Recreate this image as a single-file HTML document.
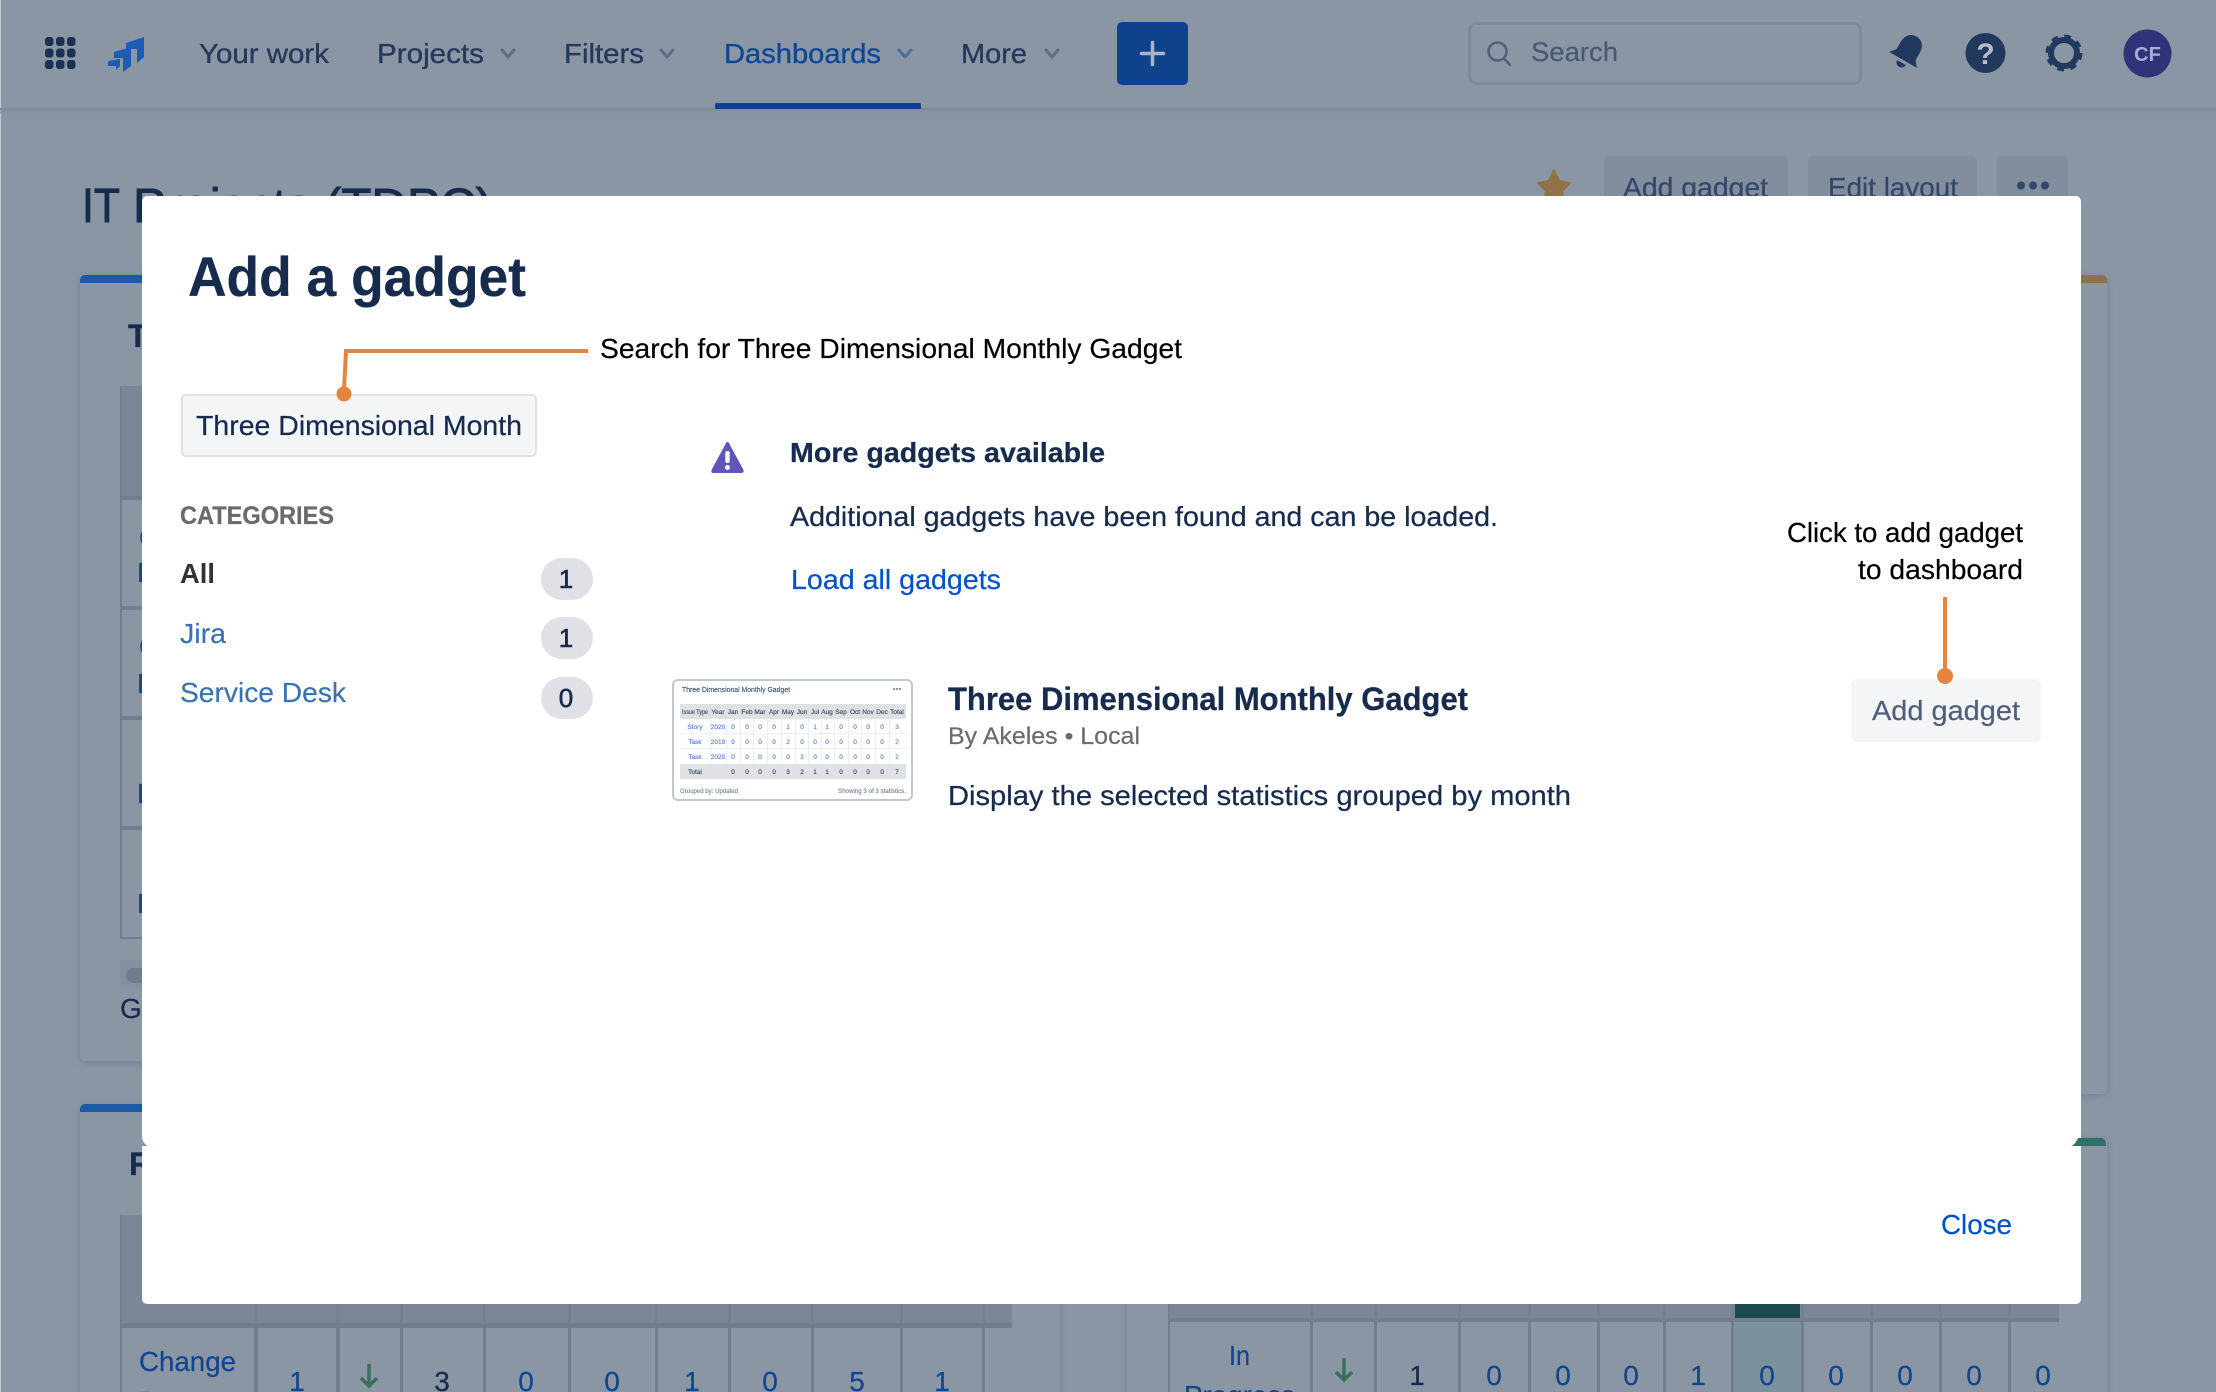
<!DOCTYPE html>
<html lang="en">
<head>
<meta charset="utf-8">
<title>Add a gadget</title>
<style>
html,body{margin:0;padding:0;background:#8b96a5;width:2216px;height:1392px;overflow:hidden}
svg{display:block}
text{font-family:"Liberation Sans",sans-serif;font-size:28px;white-space:pre}
.nav{fill:#26395b;stroke:#26395b;stroke-width:.35px}
.lb{fill:#11458e;stroke:#11458e;stroke-width:.25px}
.b{font-weight:700}
.n{fill:#172b4d;stroke:#172b4d;stroke-width:.25px}
.a{fill:#0052cc;stroke:#0052cc;stroke-width:.2px}
.c{fill:#000;stroke:#000;stroke-width:.2px}
.k{fill:#3b73af;stroke:#3b73af;stroke-width:.2px}
.t text{font-size:6.500px;stroke-width:.15px;stroke:currentColor}
</style>
</head>
<body>
<svg xmlns="http://www.w3.org/2000/svg" width="2216" height="1392" viewBox="0 0 2216 1392">
<rect width="2216" height="1392" fill="#8b96a5"/>
<rect x="0" y="0" width="1" height="1392" fill="#c3c8d0"/>

<!-- top nav -->
<rect x="0" y="108" width="2216" height="2" fill="#7f8a9a"/>
<rect x="0" y="110" width="2216" height="4" fill="#87929f" opacity=".6"/>
<g fill="#1c3055">
<rect x="45" y="37" width="8.500" height="9" rx="3"/><rect x="56" y="37" width="8.500" height="9" rx="3"/><rect x="67" y="37" width="8.500" height="9" rx="3"/>
<rect x="45" y="48.500" width="8.500" height="9" rx="3"/><rect x="56" y="48.500" width="8.500" height="9" rx="3"/><rect x="67" y="48.500" width="8.500" height="9" rx="3"/>
<rect x="45" y="60" width="8.500" height="9" rx="3"/><rect x="56" y="60" width="8.500" height="9" rx="3"/><rect x="67" y="60" width="8.500" height="9" rx="3"/>
</g>
<g fill="#1c5cb2">
<path d="M126 43L144 37V57L137 63V49H126Z"/>
<path d="M114 52L131 47V66L123 72V58H114Z"/>
<path d="M108 61L120 59V66L116 70V66H108Z"/>
</g>
<text class="nav" x="199" y="63" textLength="130" lengthAdjust="spacingAndGlyphs">Your work</text>
<text class="nav" x="377" y="63" textLength="107" lengthAdjust="spacingAndGlyphs">Projects</text>
<text class="nav" x="564" y="63" textLength="80" lengthAdjust="spacingAndGlyphs">Filters</text>
<text x="724" y="63" fill="#0d4795" stroke="#0d4795" stroke-width=".35" textLength="157" lengthAdjust="spacingAndGlyphs">Dashboards</text>
<text class="nav" x="961" y="63" textLength="66" lengthAdjust="spacingAndGlyphs">More</text>
<g fill="none" stroke="#5d6e8b" stroke-width="3" stroke-linecap="round" stroke-linejoin="round">
<path d="M502 50L508 57L514 50"/>
<path d="M661 50L667 57L673 50"/>
<path stroke="#4d6d9f" d="M899 50L905 57L911 50"/>
<path d="M1046 50L1052 57L1058 50"/>
</g>
<path d="M715 109V105a2 2 0 0 1 2-2H919a2 2 0 0 1 2 2V109Z" fill="#0e428c"/>
<rect x="1117" y="22" width="71" height="63" rx="5" fill="#0e428c"/>
<path d="M1152.500 42.500V64.500M1141.500 53.500H1163.500" stroke="#a9b4c6" stroke-width="3.500" stroke-linecap="round"/>

<rect x="1469.500" y="23.500" width="391" height="60" rx="7" fill="#8b96a5" stroke="#7e8a9a" stroke-width="3"/>
<circle cx="1497.500" cy="51.500" r="9" fill="none" stroke="#4f5f79" stroke-width="2.500"/>
<path d="M1504 58.500L1510 65" stroke="#4f5f79" stroke-width="2.500" stroke-linecap="round"/>
<text x="1531" y="61" fill="#4a5a74" stroke="#4a5a74" stroke-width=".25" style="font-size:27px" textLength="87" lengthAdjust="spacingAndGlyphs">Search</text>

<g transform="rotate(30 1907 53)" fill="#21395c">
<path d="M1907 34c-7.500 0-11 6-11 13v8l-5 6h32l-5-6v-8c0-7-3.500-13-11-13z"/>
<path d="M1902 64a5 5 0 0 0 10 0z"/>
</g>
<circle cx="1985.500" cy="53" r="20" fill="#21395c"/>
<text x="1985.500" y="64" text-anchor="middle" class="b" fill="#b6bdc9" style="font-size:30px">?</text>
<g fill="none" stroke="#21395c">
<circle cx="2064" cy="53" r="13" stroke-width="6"/>
<circle cx="2064" cy="53" r="15.500" stroke-width="6" stroke-dasharray="6.200 6"/>
</g>
<circle cx="2147.500" cy="53.500" r="24" fill="#2f3478"/>
<text x="2147.500" y="61" text-anchor="middle" class="b" fill="#a8aed2" style="font-size:20px">CF</text>

<!-- page header behind modal -->
<text x="82" y="222" fill="#172b4d" stroke="#172b4d" stroke-width=".9" style="font-size:48px" textLength="38" lengthAdjust="spacingAndGlyphs">IT</text>
<text x="133" y="222" fill="#172b4d" stroke="#172b4d" stroke-width=".9" style="font-size:48px" textLength="359" lengthAdjust="spacingAndGlyphs">Projects (TDPC)</text>
<path d="M1554 170L1559 181L1570 183L1562 191L1564 203H1544L1546 191L1538 183L1549 181Z" fill="#8f7347" stroke="#8f7347" stroke-width="2" stroke-linejoin="round"/>
<rect x="1604" y="156" width="184" height="60" rx="5" fill="#828d9d"/>
<rect x="1808" y="156" width="169" height="60" rx="5" fill="#828d9d"/>
<rect x="1997" y="156" width="71" height="60" rx="5" fill="#828d9d"/>
<text x="1623" y="197" fill="#33476a" stroke="#33476a" stroke-width=".25" textLength="145" lengthAdjust="spacingAndGlyphs">Add gadget</text>
<text x="1828" y="197" fill="#33476a" stroke="#33476a" stroke-width=".25" textLength="130" lengthAdjust="spacingAndGlyphs">Edit layout</text>
<g fill="#33476a"><circle cx="2021" cy="185.500" r="4"/><circle cx="2033" cy="185.500" r="4"/><circle cx="2045" cy="185.500" r="4"/></g>

<!-- panels -->
<g fill="#8b96a5" style="filter:drop-shadow(0 2px 4px rgba(9,30,66,.18))">
<rect x="80" y="275" width="980" height="786" rx="5"/>
<rect x="1127" y="275" width="980" height="819" rx="5"/>
<rect x="80" y="1104" width="980" height="320" rx="5"/>
<rect x="1127" y="1138" width="980" height="280" rx="5"/>
</g>
<path d="M80 283V280a5 5 0 0 1 5-5H1055a5 5 0 0 1 5 5V283Z" fill="#1c5aa8"/>
<path d="M80 1112V1109a5 5 0 0 1 5-5H1055a5 5 0 0 1 5 5V1112Z" fill="#1c5aa8"/>
<path d="M1127 283V280a5 5 0 0 1 5-5H2102a5 5 0 0 1 5 5V283Z" fill="#8f7347"/>
<path d="M1127 1146V1143a5 5 0 0 1 5-5H2101a5 5 0 0 1 5 5V1146Z" fill="#32706a"/>

<!-- upper-left table fragment -->
<text x="128" y="347" class="b n" style="font-size:32px">Three</text>
<rect x="120" y="386" width="30" height="112" fill="#7b8696"/>
<g fill="#727d8d">
<rect x="120" y="386" width="2" height="553"/>
<rect x="120" y="496" width="30" height="4"/>
<rect x="120" y="606" width="30" height="4"/>
<rect x="120" y="716" width="30" height="4"/>
<rect x="120" y="826" width="30" height="4"/>
<rect x="120" y="937" width="30" height="2"/>
</g>
<text class="lb" x="139" y="547">Change</text>
<text class="lb" x="137" y="582">F</text>
<text class="lb" x="139" y="656">Change</text>
<text class="lb" x="137" y="693">F</text>
<text class="lb" x="137" y="803">F</text>
<text class="lb" x="137" y="913">F</text>
<rect x="120" y="960" width="30" height="28" fill="#8490a0"/>
<rect x="126" y="968" width="30" height="15" rx="7.500" fill="#717c8c"/>
<text x="120" y="1018" class="n">G</text>
<text x="129" y="1175" class="b n" style="font-size:32px">R</text>

<!-- bottom-left table -->
<rect x="120" y="1215" width="892" height="109" fill="#7b8696"/>
<g fill="#76818f">
<rect x="254" y="1300" width="4" height="28"/>
<rect x="336" y="1300" width="4" height="28"/>
<rect x="400" y="1300" width="3" height="28"/>
<rect x="483" y="1300" width="3" height="28"/>
<rect x="568" y="1300" width="3" height="28"/>
<rect x="655" y="1300" width="3" height="28"/>
<rect x="728" y="1300" width="3" height="28"/>
<rect x="811" y="1300" width="3" height="28"/>
<rect x="900" y="1300" width="3" height="28"/>
<rect x="982" y="1300" width="3" height="28"/>
</g>
<rect x="120" y="1323" width="892" height="5" fill="#727d8d"/>
<g fill="#727d8d">
<rect x="120" y="1215" width="2" height="177"/>
<rect x="254" y="1328" width="4" height="64"/>
<rect x="336" y="1328" width="4" height="64"/>
<rect x="400" y="1328" width="3" height="64"/>
<rect x="483" y="1328" width="3" height="64"/>
<rect x="568" y="1328" width="3" height="64"/>
<rect x="655" y="1328" width="3" height="64"/>
<rect x="728" y="1328" width="3" height="64"/>
<rect x="811" y="1328" width="3" height="64"/>
<rect x="900" y="1328" width="3" height="64"/>
<rect x="982" y="1328" width="3" height="64"/>
</g>
<text class="lb" x="139" y="1371" textLength="97" lengthAdjust="spacingAndGlyphs">Change</text>
<text class="lb" x="139" y="1411" textLength="103" lengthAdjust="spacingAndGlyphs">Requests</text>
<g text-anchor="middle">
<text class="lb" x="297" y="1391">1</text>
<text class="n" x="442" y="1391">3</text>
<text class="lb" x="526" y="1391">0</text>
<text class="lb" x="612" y="1391">0</text>
<text class="lb" x="692" y="1391">1</text>
<text class="lb" x="770" y="1391">0</text>
<text class="lb" x="857" y="1391">5</text>
<text class="lb" x="942" y="1391">1</text>
</g>
<path d="M369 1364V1386M361 1378L369 1386L377 1378" fill="none" stroke="#3a7058" stroke-width="3.500"/>

<!-- bottom-right table -->
<rect x="1168" y="1215" width="891" height="103" fill="#7b8696"/>
<g fill="#76818f">
<rect x="1310" y="1300" width="3" height="22"/>
<rect x="1374" y="1300" width="3" height="22"/>
<rect x="1458" y="1300" width="3" height="22"/>
<rect x="1528" y="1300" width="3" height="22"/>
<rect x="1597" y="1300" width="3" height="22"/>
<rect x="1663" y="1300" width="3" height="22"/>
<rect x="1731" y="1300" width="3" height="22"/>
<rect x="1801" y="1300" width="3" height="22"/>
<rect x="1870" y="1300" width="3" height="22"/>
<rect x="1939" y="1300" width="3" height="22"/>
<rect x="2008" y="1300" width="3" height="22"/>
</g>
<rect x="1168" y="1318" width="891" height="4" fill="#727d8d"/>
<rect x="1735" y="1300" width="65" height="18" fill="#1c4a4c"/>
<rect x="1735" y="1322" width="66" height="70" fill="#7b919b"/>
<g fill="#727d8d">
<rect x="1168" y="1300" width="2" height="92"/>
<rect x="1310" y="1322" width="3" height="70"/>
<rect x="1374" y="1322" width="3" height="70"/>
<rect x="1458" y="1322" width="3" height="70"/>
<rect x="1528" y="1322" width="3" height="70"/>
<rect x="1597" y="1322" width="3" height="70"/>
<rect x="1663" y="1322" width="3" height="70"/>
<rect x="1731" y="1322" width="3" height="70"/>
<rect x="1801" y="1322" width="3" height="70"/>
<rect x="1870" y="1322" width="3" height="70"/>
<rect x="1939" y="1322" width="3" height="70"/>
<rect x="2008" y="1322" width="3" height="70"/>
</g>
<text class="lb" x="1229" y="1365" textLength="21" lengthAdjust="spacingAndGlyphs">In</text>
<text class="lb" x="1184" y="1405" textLength="111" lengthAdjust="spacingAndGlyphs">Progress</text>
<g text-anchor="middle">
<text class="n" x="1417" y="1385">1</text>
<text class="lb" x="1494" y="1385">0</text>
<text class="lb" x="1563" y="1385">0</text>
<text class="lb" x="1631" y="1385">0</text>
<text class="lb" x="1698" y="1385">1</text>
<text class="lb" x="1767" y="1385">0</text>
<text class="lb" x="1836" y="1385">0</text>
<text class="lb" x="1905" y="1385">0</text>
<text class="lb" x="1974" y="1385">0</text>
<text class="lb" x="2043" y="1385">0</text>
</g>
<path d="M1344 1358V1380M1336 1372L1344 1380L1352 1372" fill="none" stroke="#3a7058" stroke-width="3.500"/>

<!-- modal -->
<rect x="142" y="196" width="1939" height="1108" rx="5" fill="#fff"/>
<path d="M141 1137H142Q143 1144 148 1146H141Z" fill="#8b96a5"/>
<path d="M2081.500 1138H2078Q2075 1145 2071 1146H2081.500Z" fill="#32706a"/>

<text x="188" y="296" class="b n" style="font-size:56px" textLength="338" lengthAdjust="spacingAndGlyphs">Add a gadget</text>

<path d="M588 351H346L344 390" fill="none" stroke="#e5843f" stroke-width="4"/>
<text x="600" y="358" class="c" textLength="582" lengthAdjust="spacingAndGlyphs">Search for Three Dimensional Monthly Gadget</text>

<rect x="182" y="395" width="354" height="61" rx="4" fill="#f4f5f7" stroke="#dfe1e6" stroke-width="2"/>
<circle cx="344" cy="394" r="7.500" fill="#e5843f"/>
<text x="196" y="435" class="n" textLength="326" lengthAdjust="spacingAndGlyphs">Three Dimensional Month</text>

<text x="180" y="524" class="b" fill="#6b6b6b" stroke="#6b6b6b" stroke-width=".3" style="font-size:25px" textLength="154" lengthAdjust="spacingAndGlyphs">CATEGORIES</text>
<text x="180" y="583" class="b" fill="#333" textLength="35" lengthAdjust="spacingAndGlyphs">All</text>
<text x="180" y="643" class="k" textLength="46" lengthAdjust="spacingAndGlyphs">Jira</text>
<text x="180" y="702" class="k" textLength="166" lengthAdjust="spacingAndGlyphs">Service Desk</text>

<rect x="541" y="558" width="52" height="42" rx="21" fill="#dfe1e6"/>
<rect x="541" y="617" width="52" height="42" rx="21" fill="#dfe1e6"/>
<rect x="541" y="677" width="52" height="42" rx="21" fill="#dfe1e6"/>
<g text-anchor="middle">
<text fill="#172b4d" stroke="#172b4d" stroke-width=".6" x="566" y="588" style="font-size:26px">1</text>
<text fill="#172b4d" stroke="#172b4d" stroke-width=".6" x="566" y="647" style="font-size:26px">1</text>
<text fill="#172b4d" stroke="#172b4d" stroke-width=".6" x="566" y="707" style="font-size:26px">0</text>
</g>

<!-- info block -->
<path d="M727.500 442Q729 442 730 445L743 469Q745 473 741 473H714Q710 473 712 469L725 445Q726 442 727.500 442Z" fill="#5e56b8"/>
<rect x="725.300" y="451" width="4.400" height="12" rx="2" fill="#fff"/>
<circle cx="727.500" cy="467.500" r="2.500" fill="#fff"/>
<text x="790" y="462" class="b n" textLength="315" lengthAdjust="spacingAndGlyphs">More gadgets available</text>
<text x="790" y="526" class="n" textLength="708" lengthAdjust="spacingAndGlyphs">Additional gadgets have been found and can be loaded.</text>
<text x="791" y="589" class="a" textLength="210" lengthAdjust="spacingAndGlyphs">Load all gadgets</text>

<!-- thumbnail -->
<rect x="673" y="680" width="239" height="120" rx="5" fill="#fff" stroke="#c1c7d0" stroke-width="2"/>
<g style="filter:blur(.35px)" class="t">
<text x="682" y="692" fill="#42526e" color="#42526e" style="font-size:7.500px" textLength="108" lengthAdjust="spacingAndGlyphs">Three Dimensional Monthly Gadget</text>
<g fill="#6b778c"><circle cx="894" cy="689" r="1"/><circle cx="897" cy="689" r="1"/><circle cx="900" cy="689" r="1"/></g>
<rect x="680" y="704" width="226" height="15" fill="#dfe1e5"/>
<rect x="680" y="764" width="226" height="15" fill="#dfe1e5"/>
<g fill="#eceef1">
<rect x="680" y="733" width="226" height="1"/><rect x="680" y="748" width="226" height="1"/>
<rect x="710" y="719" width="1" height="45"/><rect x="726" y="719" width="1" height="45"/>
<rect x="740" y="719" width="1" height="45"/><rect x="753" y="719" width="1" height="45"/><rect x="767" y="719" width="1" height="45"/><rect x="781" y="719" width="1" height="45"/><rect x="795" y="719" width="1" height="45"/><rect x="808" y="719" width="1" height="45"/><rect x="821" y="719" width="1" height="45"/><rect x="834" y="719" width="1" height="45"/><rect x="848" y="719" width="1" height="45"/><rect x="861" y="719" width="1" height="45"/><rect x="875" y="719" width="1" height="45"/><rect x="889" y="719" width="1" height="45"/>
</g>
<g text-anchor="middle">
<g fill="#3d4a60" color="#3d4a60">
<text x="695" y="714" textLength="26" lengthAdjust="spacingAndGlyphs">Issue Type</text><text x="718" y="714">Year</text>
<text x="733" y="714">Jan</text><text x="747" y="714">Feb</text><text x="760" y="714">Mar</text><text x="774" y="714">Apr</text><text x="788" y="714">May</text><text x="802" y="714">Jun</text><text x="815" y="714">Jul</text><text x="827" y="714">Aug</text><text x="841" y="714">Sep</text><text x="855" y="714">Oct</text><text x="868" y="714">Nov</text><text x="882" y="714">Dec</text><text x="897" y="714">Total</text>
</g>
<g fill="#5b7fd0" color="#5b7fd0">
<text x="695" y="729">Story</text><text x="718" y="729">2020</text>
<text x="733 747 760 774 788 802 815 827 841 855 868 882" y="729">000010110000</text>
<text x="695" y="744">Task</text><text x="718" y="744">2019</text>
<text x="733 747 760 774 788 802 815 827 841 855 868 882" y="744">000020000000</text>
<text x="695" y="759">Task</text><text x="718" y="759">2020</text>
<text x="733 747 760 774 788 802 815 827 841 855 868 882" y="759">000002000000</text>
</g>
<g fill="#7a8699" color="#7a8699">
<text x="897" y="729">3</text><text x="897" y="744">2</text><text x="897" y="759">2</text>
</g>
<g fill="#3d4a60" color="#3d4a60">
<text x="695" y="774">Total</text>
<text x="733 747 760 774 788 802 815 827 841 855 868 882 897" y="774">0000321100007</text>
</g>
</g>
<text x="680" y="793" fill="#7a8699" color="#7a8699" textLength="58" lengthAdjust="spacingAndGlyphs">Grouped by: Updated</text>
<text x="838" y="793" fill="#7a8699" color="#7a8699" textLength="68" lengthAdjust="spacingAndGlyphs">Showing 3 of 3 statistics.</text>
</g>

<!-- gadget row -->
<text x="948" y="710" class="b n" style="font-size:32px" textLength="520" lengthAdjust="spacingAndGlyphs">Three Dimensional Monthly Gadget</text>
<text x="948" y="744" fill="#6b6b6b" stroke="#6b6b6b" stroke-width=".2" style="font-size:24px" textLength="192" lengthAdjust="spacingAndGlyphs">By Akeles • Local</text>
<text x="948" y="805" class="n" textLength="623" lengthAdjust="spacingAndGlyphs">Display the selected statistics grouped by month</text>

<text x="1787" y="542" class="c" textLength="236" lengthAdjust="spacingAndGlyphs">Click to add gadget</text>
<text x="1858" y="579" class="c" textLength="165" lengthAdjust="spacingAndGlyphs">to dashboard</text>
<rect x="1851" y="679" width="190" height="63" rx="6" fill="#f4f5f7"/>
<rect x="1943" y="597" width="4" height="78" fill="#e5843f"/>
<circle cx="1945" cy="676" r="8" fill="#e5843f"/>
<text x="1872" y="720" fill="#505f79" stroke="#505f79" stroke-width=".2" textLength="148" lengthAdjust="spacingAndGlyphs">Add gadget</text>

<text x="1941" y="1234" class="a" textLength="71" lengthAdjust="spacingAndGlyphs">Close</text>
</svg>
</body>
</html>
